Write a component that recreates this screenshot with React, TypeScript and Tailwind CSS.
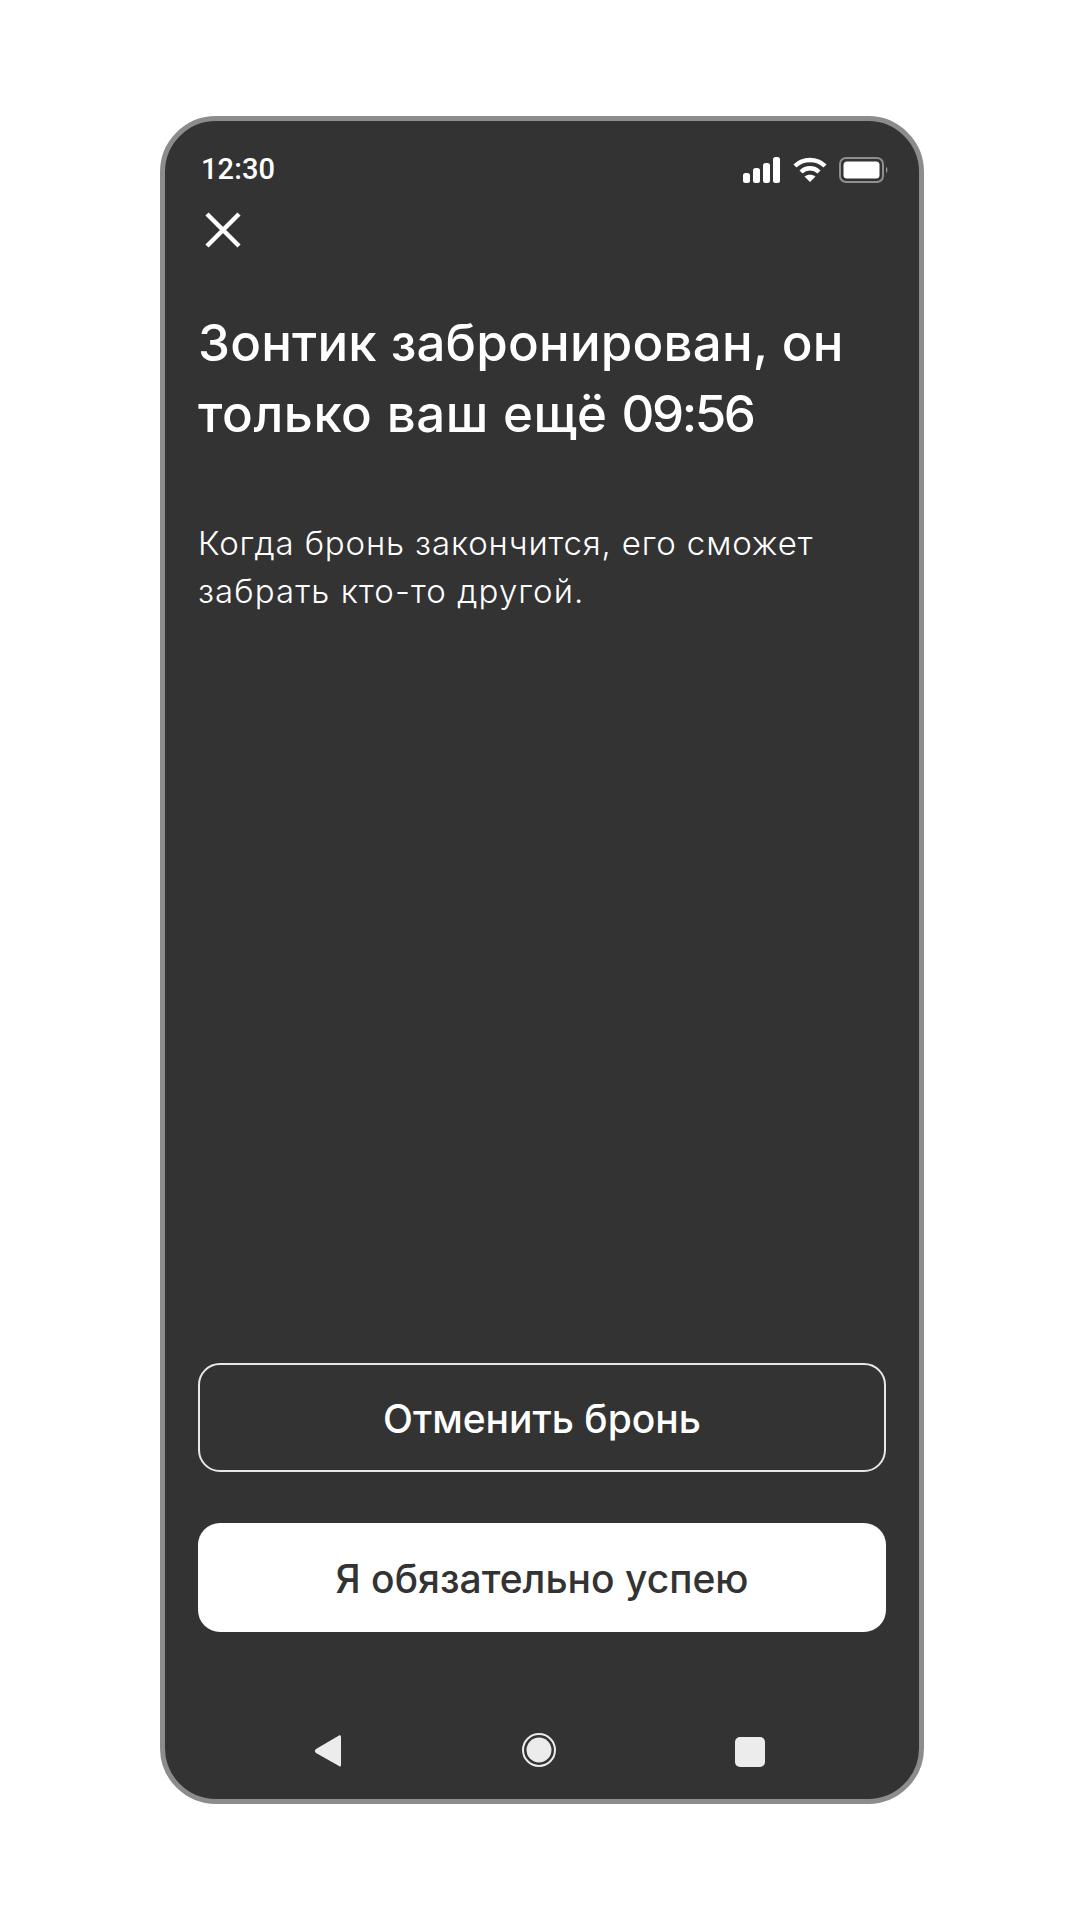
import React from 'react';

const font = { sans: "font-['Inter','Noto_Sans',sans-serif]" };

function StatusIcons() {
  return (
    <div className="flex items-center gap-[12px]">
      <svg width="38" height="26" viewBox="0 0 38 26" fill="#fff">
        <rect x="0" y="16" width="7" height="10" rx="2.500" />
        <rect x="10" y="11" width="7" height="15" rx="2.500" />
        <rect x="20" y="6" width="7" height="20" rx="2.500" />
        <rect x="30" y="0" width="7" height="26" rx="2.500" />
      </svg>
      <svg width="34" height="26" viewBox="0 0 34 26" fill="none" stroke="#fff" strokeWidth="4.4">
        <path d="M2 9 C10 1 24 1 32 9" />
        <path d="M8 15 C13 10 21 10 26 15" />
        <path d="M17 25 L11.5 19.5 C14.5 17 19.5 17 22.500 19.5 Z" fill="#fff" stroke="none" />
      </svg>
      <svg width="50" height="26" viewBox="0 0 50 26" fill="none">
        <rect x="1" y="1" width="43" height="24" rx="6" stroke="#8f8f8f" strokeWidth="2" />
        <rect x="4.500" y="4.500" width="36" height="17" rx="3.500" fill="#fff" />
        <path d="M47 10 C49 11 49 15 47 16 Z" fill="#8f8f8f" />
      </svg>
    </div>
  );
}

export default function App() {
  return (
    <div className="min-h-[1920px] bg-white pt-[116px] pl-[160px]">
      <div className="w-[764px] h-[1688px] bg-[#333333] border-[5px] border-[#8c8c8c] rounded-[56px] flex flex-col px-[33px] text-white">
        {/* status bar */}
        <div className="flex items-center justify-between h-[52px] mt-[23px] pl-[3px] -mr-[3px]">
          <span className="font-['Roboto',sans-serif] text-[29px] font-medium tracking-[0.1px]">12:30</span>
          <StatusIcons />
        </div>

        <button className="w-[36px] h-[36px] mt-[16px] ml-[7px]">
          <svg width="36" height="36" viewBox="0 0 36 36" stroke="#fff" strokeWidth="4.500" fill="none">
            <path d="M2 2 L34 34 M34 2 L2 34" />
          </svg>
        </button>

        <h1 className={`${font.sans} mt-[59px] text-[51px] leading-[71px] font-medium tracking-[0.2px]`}>
          Зонтик забронирован, он<br />
          <span className="tracking-[0.55px]">только ваш ещё</span>{' '}
          <span className="tracking-[-2.4px]">09:56</span>
        </h1>

        <p className={`${font.sans} mt-[70px] text-[33px] leading-[48px] font-light tracking-[0.85px]`}>
          Когда бронь закончится, его сможет<br />
          <span className="tracking-[1.1px]">забрать кто-то другой.</span>
        </p>

        <div className="flex-1" />

        <div className="flex flex-col gap-[51px] w-[688px]">
          <button className={`${font.sans} h-[109px] rounded-[22px] border-2 border-[#e8e8e8] text-[39px] pt-[3px] font-medium`}>
            Отменить бронь
          </button>
          <button className={`${font.sans} h-[109px] rounded-[22px] bg-white text-[#333333] text-[39px] pt-[3px] font-medium`}>
            Я обязательно успею
          </button>
        </div>

        {/* android nav */}
        <div className="h-[167px] flex items-end justify-between pb-[32px] pl-[116px] pr-[121px]">
          <svg width="28" height="32" viewBox="0 0 28 32" fill="#ececec">
            <path d="M25 0.500 C26.500 0 27 1 27 2 L27 30 C27 31.500 26 32 25 31 L2 18 C0.500 17 0.500 15 2 14 Z" />
          </svg>
          <svg width="34" height="34" viewBox="0 0 34 34">
            <circle cx="17" cy="17" r="16" fill="none" stroke="#ececec" strokeWidth="2" />
            <circle cx="17" cy="17" r="12.500" fill="#ececec" />
          </svg>
          <div className="w-[30px] h-[30px] rounded-[5px] bg-[#ececec]" />
        </div>
      </div>
    </div>
  );
}
